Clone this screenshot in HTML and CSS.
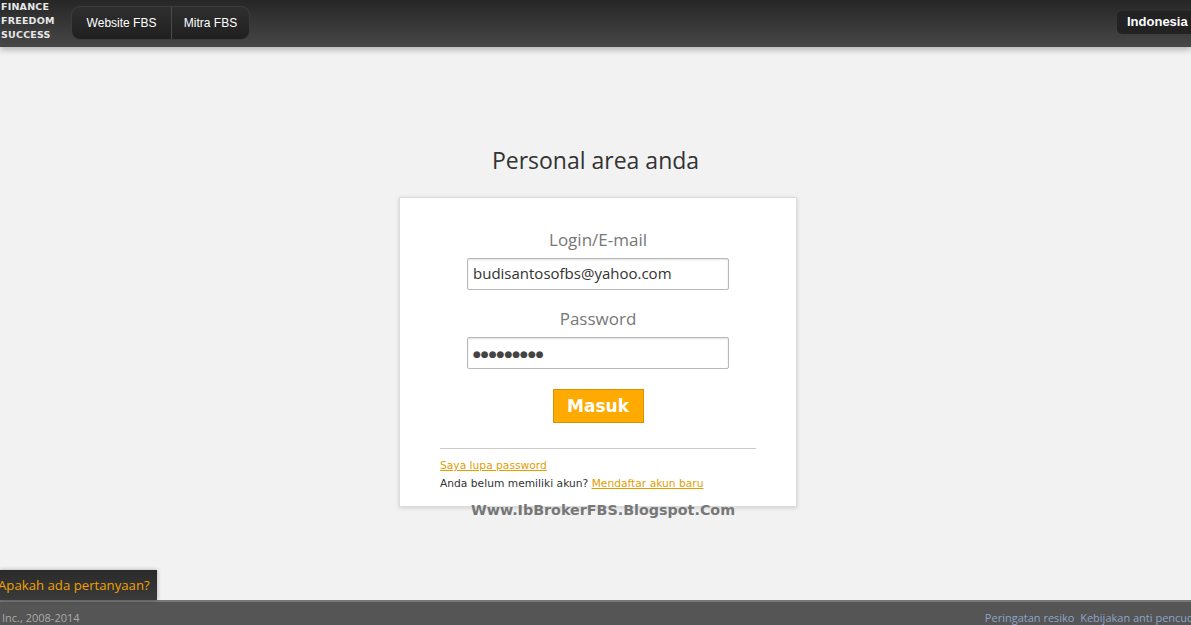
FILE: index.html
```html
<!DOCTYPE html>
<html lang="id">
<head>
    <meta charset="UTF-8">
    <title>Personal area anda</title>
    <link rel="stylesheet" href="styles.css">
</head>
<body>
    <header class="topbar">
        <div class="brand">FINANCE<br>FREEDOM<br>SUCCESS</div>
        <nav class="nav-pill">
            <a href="#">Website FBS</a>
            <a href="#">Mitra FBS</a>
        </nav>
        <div class="lang">Indonesia</div>
    </header>

    <main class="content">
        <h1 class="title">Personal area anda</h1>
        <form class="card">
            <label class="label">Login/E-mail</label>
            <div class="field">budisantosofbs@yahoo.com</div>
            <label class="label">Password</label>
            <div class="field dots">&#9679;&#9679;&#9679;&#9679;&#9679;&#9679;&#9679;&#9679;&#9679;</div>
            <button type="button" class="btn">Masuk</button>
            <div class="links">
                <a href="#">Saya lupa password</a>
                <p>Anda belum memiliki akun? <a href="#">Mendaftar akun baru</a></p>
            </div>
            <div class="watermark">Www.IbBrokerFBS.Blogspot.Com</div>
        </form>
    </main>

    <div class="ask">Apakah ada pertanyaan?</div>

    <footer class="footer">
        <span>Inc., 2008-2014</span>
        <span class="footer-links">Peringatan resiko&nbsp;&nbsp;Kebijakan anti pencucian</span>
    </footer>
</body>
</html>
```

FILE: styles.css
```css
* {
    box-sizing: border-box;
    margin: 0;
    padding: 0;
}

body {
    font-family: 'Open Sans', 'DejaVu Sans', sans-serif;
    background: #f2f2f2;
    min-height: 100vh;
    display: flex;
    flex-direction: column;
    overflow: hidden;
}

.topbar {
    height: 47px;
    background: linear-gradient(#262626, #474747);
    box-shadow: 0 3px 6px rgba(0, 0, 0, 0.25);
    display: flex;
    align-items: flex-start;
    padding: 0 0 0 1px;
    position: relative;
    z-index: 2;
}

.brand {
    color: #e8e8e8;
    font-family: 'DejaVu Sans', sans-serif;
    font-size: 9.5px;
    font-weight: bold;
    line-height: 14px;
    letter-spacing: 0.2px;
    width: 70px;
}

.nav-pill {
    display: flex;
    margin-top: 6px;
    height: 34px;
    background: linear-gradient(#2f2f2f, #1f1f1f);
    border-radius: 9px;
    border: 1px solid #3c3c3c;
}

.nav-pill a {
    color: #fff;
    text-decoration: none;
    font-family: 'Liberation Sans', sans-serif;
    font-size: 12px;
    white-space: nowrap;
    display: flex;
    align-items: center;
    justify-content: center;
}

.nav-pill a:first-child {
    width: 100px;
    border-right: 1px solid #4a4a4a;
}

.nav-pill a:last-child {
    width: 77px;
}

.lang {
    margin-left: auto;
    margin-top: 11px;
    height: 23px;
    background: #222;
    border-radius: 5px 0 0 5px;
    color: #fff;
    font-family: 'Liberation Sans', sans-serif;
    font-weight: bold;
    font-size: 13px;
    line-height: 22px;
    padding-left: 10px;
    width: 74px;
    white-space: nowrap;
}

.content {
    flex: 1;
    display: flex;
    flex-direction: column;
    align-items: center;
    padding-top: 100px;
}

.title {
    font-weight: normal;
    font-size: 23px;
    color: #333;
    line-height: 26px;
    margin-bottom: 24px;
}

.card {
    width: 398px;
    height: 310px;
    background: #fff;
    border: 1px solid #dcdcdc;
    box-shadow: 0 1px 4px rgba(0, 0, 0, 0.15);
    display: flex;
    flex-direction: column;
    align-items: center;
    padding-top: 31px;
    margin-left: 5px;
    position: relative;
}

.label {
    font-size: 17px;
    color: #777;
    line-height: 22px;
    margin-bottom: 7px;
}

.field {
    width: 262px;
    height: 32px;
    border: 1px solid #b8b8b8;
    border-radius: 2px;
    box-shadow: inset 0 1px 2px rgba(0, 0, 0, 0.12);
    font-size: 15px;
    color: #333;
    padding: 4px 5px 0;
    margin-bottom: 18px;
}

.field.dots {
    font-size: 9px;
    padding-top: 9px;
    color: #444;
    margin-bottom: 16px;
}

.btn {
    width: 91px;
    height: 34px;
    background: #ffaa00;
    border: 1px solid #d99100;
    color: #fff;
    font-family: 'DejaVu Sans', sans-serif;
    font-weight: bold;
    font-size: 17px;
    margin-top: 4px;
}

.links {
    width: 316px;
    border-top: 1px solid #ccc;
    margin-top: 25px;
    padding-top: 8px;
    font-family: 'DejaVu Sans', sans-serif;
    font-size: 10.7px;
    line-height: 18px;
    color: #333;
}

.links a {
    color: #e39d00;
}

.watermark {
    position: absolute;
    bottom: -12px;
    left: 0;
    right: 0;
    text-align: center;
    font-family: 'DejaVu Sans', sans-serif;
    font-weight: bold;
    font-size: 14.3px;
    color: #777;
    margin-left: 10px;
}

.ask {
    position: absolute;
    left: 0;
    top: 570px;
    height: 30px;
    width: 157px;
    background: linear-gradient(#2a2a2a, #3a3a3a);
    box-shadow: 0 0 4px rgba(0, 0, 0, 0.3);
    color: #f0a000;
    font-size: 13.2px;
    line-height: 30px;
    text-indent: -2px;
    white-space: nowrap;
}

.footer {
    height: 25px;
    background: #555;
    border-top: 2px solid #777;
    display: flex;
    justify-content: space-between;
    align-items: flex-end;
    padding-left: 2px;
    font-size: 11px;
    color: #aaa;
    line-height: 14px;
    white-space: nowrap;
    overflow: hidden;
}

.footer-links {
    margin-right: -17px;
    color: #8fa3c8;
}
```
